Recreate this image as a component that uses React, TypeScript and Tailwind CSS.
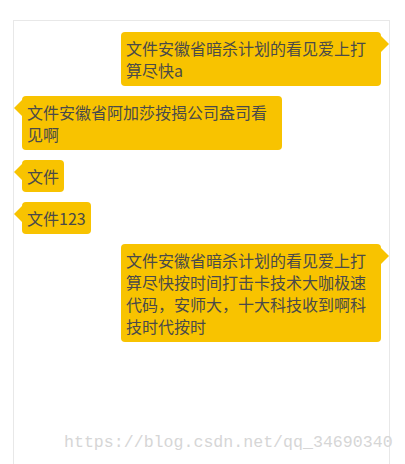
const messages: { side: 'left' | 'right'; text: string }[] = [
  { side: 'right', text: '文件安徽省暗杀计划的看见爱上打算尽快a' },
  { side: 'left', text: '文件安徽省阿加莎按揭公司盎司看见啊' },
  { side: 'left', text: '文件' },
  { side: 'left', text: '文件123' },
  {
    side: 'right',
    text: '文件安徽省暗杀计划的看见爱上打算尽快按时间打击卡技术大咖极速代码，安师大，十大科技收到啊科技时代按时',
  },
];

function Bubble({ side, text }: { side: 'left' | 'right'; text: string }) {
  const isRight = side === 'right';
  return (
    <div className={isRight ? 'flex justify-end' : 'flex justify-start'}>
      <div className="relative max-w-[260px] rounded-[4px] bg-[#f8c300] p-[5px] text-[16px] leading-[22px] text-[#4a4a4a] break-all">
        {/* arrow */}
        {isRight ? (
          <span className="absolute top-[4px] right-[-8px] h-0 w-0 border-y-[8px] border-l-[8px] border-y-transparent border-l-[#f8c300]" />
        ) : (
          <span className="absolute top-[4px] left-[-8px] h-0 w-0 border-y-[8px] border-r-[8px] border-y-transparent border-r-[#f8c300]" />
        )}
        {text}
      </div>
    </div>
  );
}

export default function App() {
  return (
    <div
      className="relative h-[464px] w-[405px] overflow-hidden bg-white pt-[20px] pl-[13px]"
      style={{ fontFamily: '"Microsoft YaHei", "Noto Sans CJK SC", "Noto Sans", sans-serif' }}
    >
      <div className="h-[460px] w-[377px] border border-[#e8e8e8] px-[8px] pt-[11px]">
        <div className="flex flex-col gap-[10px]">
          {messages.map((m, i) => (
            <Bubble key={i} side={m.side} text={m.text} />
          ))}
        </div>
      </div>
      {/* watermark */}
      <div className="absolute left-[64px] top-[435px] whitespace-nowrap font-['Liberation_Mono',monospace] text-[16.6px] leading-[16px] text-[#d6d6d6]">
        https://blog.csdn.net/qq_34690340
      </div>
    </div>
  );
}
